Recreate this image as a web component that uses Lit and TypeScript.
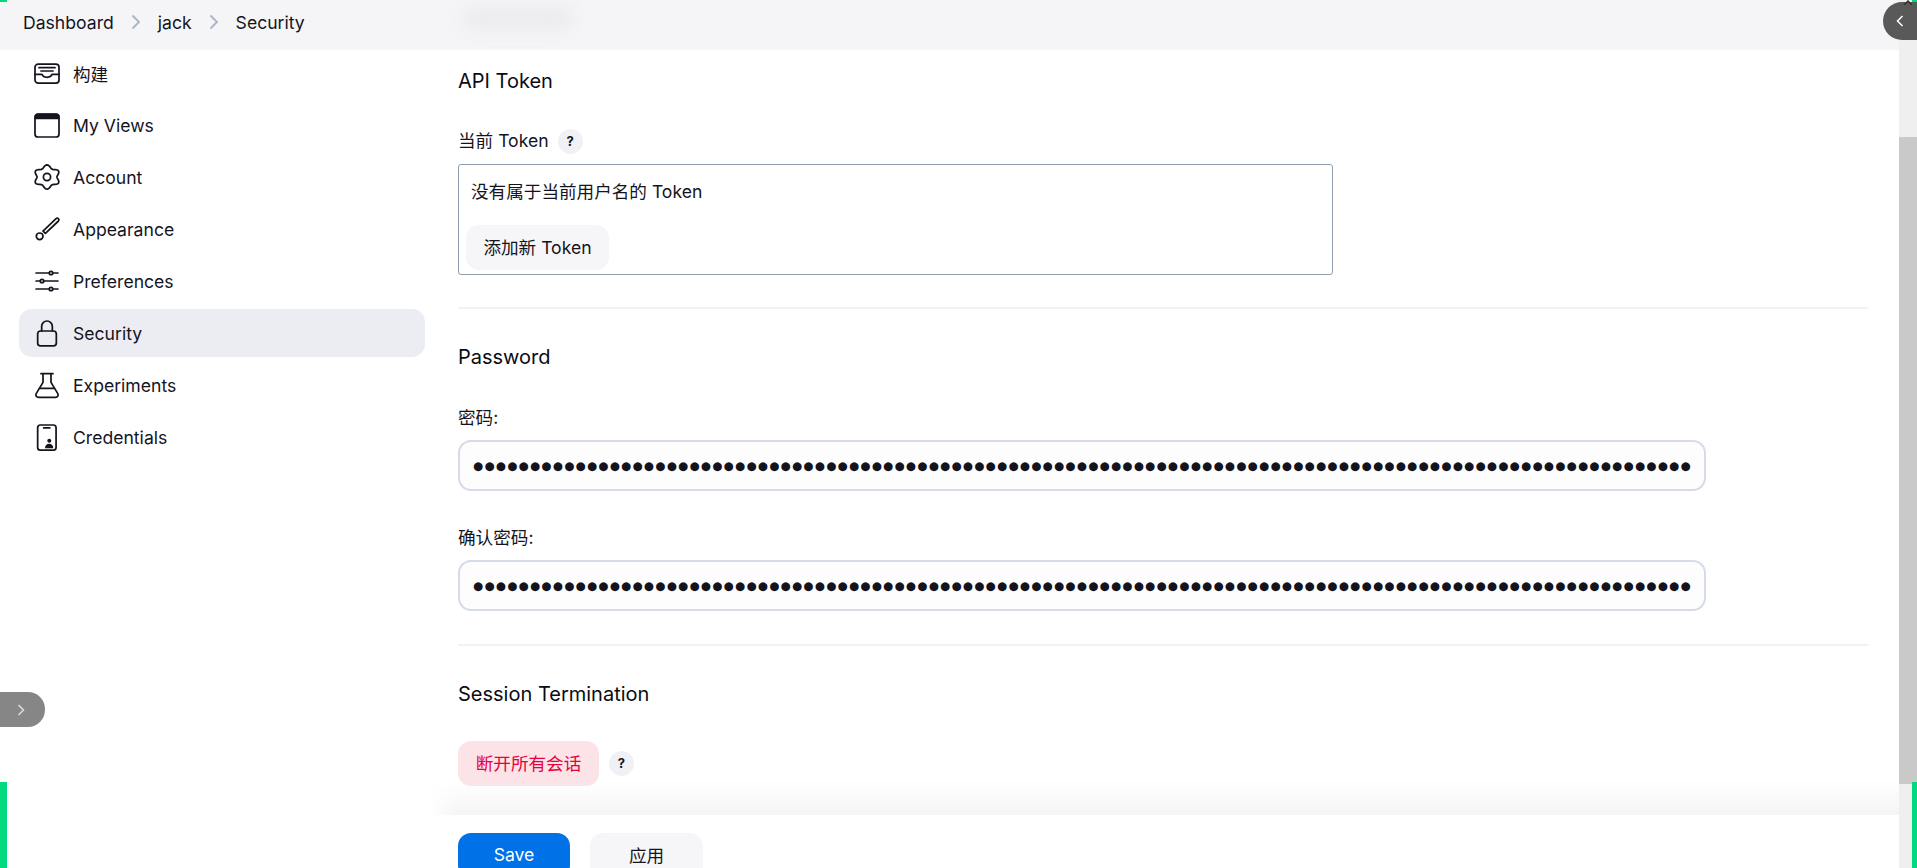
import { LitElement, html, css, svg } from "lit";
import { customElement } from "lit/decorators.js";

const gearPath = (() => {
  const pts: string[] = [];
  for (let i = 0; i < 72; i++) {
    const a = (i / 72) * Math.PI * 2;
    const r = 7.9 + 1.15 * Math.cos(6 * a);
    const x = 12 + Math.sin(a) * r * 1.1;
    const y = 12 - Math.cos(a) * r;
    pts.push(`${x.toFixed(2)} ${y.toFixed(2)}`);
  }
  return `M${pts.join("L")}Z`;
})();

const ICONS: Record<string, unknown> = {
  build: svg`<rect x="3" y="5.300" width="18" height="14.300" rx="2.400"/><path d="M3 13h5.200c.5 1.400 2 2.200 3.800 2.200s3.300-.8 3.800-2.200H21"/><path d="M6 8h12M7.500 10.500h9"/>`,
  views: svg`<rect x="3" y="3.800" width="18" height="17.200" rx="2.300"/><path d="M3.200 7V6a2 2 0 0 1 2-2h13.600a2 2 0 0 1 2 2v1z" fill="currentColor"/>`,
  account: svg`<path d=${gearPath}/><circle cx="12" cy="12" r="2.700"/>`,
  appearance: svg`<path d="M18.800 4.300a1.200 1.200 0 0 1 1.800 1.700L10.800 15.300 9 13.600z"/><circle cx="6.500" cy="17.500" r="2.500"/>`,
  prefs: svg`<path d="M3.800 6h9.700M16.500 6h3.700M3.800 12h2.900M9.800 12h10.400M3.800 18h9.700M16.500 18h3.700"/><circle cx="15" cy="6" r="1.300"/><circle cx="8.250" cy="12" r="1.300"/><circle cx="15" cy="18" r="1.300"/>`,
  lock: svg`<rect x="5" y="10.500" width="14" height="11.200" rx="2.200"/><path d="M8 10.500V7a4 4 0 0 1 8 0v3.500"/>`,
  flask: svg`<path d="M7.500 3.500h9M9 3.500V10L4 18.300c-.9 1.500 0 3 1.700 3h12.600c1.700 0 2.600-1.500 1.700-3L15 10V3.500"/><path d="M6.500 14.500h11"/>`,
  cred: svg`<rect x="5" y="3" width="13.800" height="18.800" rx="2"/><path d="M9.500 5.200h4.600"/><circle cx="13.700" cy="14.800" r="1.500" fill="currentColor" stroke="none"/><path d="M10.500 20.400c0-2 1.300-3.300 3.100-3.300s3.100 1.300 3.100 3.300z" fill="currentColor" stroke="none"/>`,
};

const NAV: [string, string, boolean?][] = [
  ["build", "构建"],
  ["views", "My Views"],
  ["account", "Account"],
  ["appearance", "Appearance"],
  ["prefs", "Preferences"],
  ["lock", "Security", true],
  ["flask", "Experiments"],
  ["cred", "Credentials"],
];

const DOTS = "●".repeat(107);

@customElement("app-root")
export class AppRoot extends LitElement {
  static styles = css`
    :host {
      display: block;
      height: 868px;
      overflow: hidden;
      position: relative;
      background: #fff;
      color: #14141f;
      font-family: Inter, "Noto Sans CJK SC", sans-serif;
      font-size: 17.6px;
    }
    .frame { display: flex; height: 868px; }
    .page { flex: 1; min-width: 0; display: flex; flex-direction: column; }
    .crumbs {
      height: 50px; flex: none; background: #f5f5f7; box-sizing: border-box;
      display: flex; align-items: center; padding: 0 0 6px 23px;
      position: relative; z-index: 2;
    }
    .crumbs a { color: #14141f; }
    .crumbs svg { width: 14px; height: 14px; fill: none; stroke: #a9b4c6; stroke-width: 1.800; margin: 0 15px; overflow: visible; }
    .blur {
      position: absolute; left: 462px; top: 6px; width: 112px; height: 24px;
      background: #ececee; filter: blur(8px); border-radius: 12px;
    }
    .body { flex: 1; display: flex; min-height: 0; }
    .side { width: 458px; flex: none; padding: 0 0 0 19px; box-sizing: border-box; margin-top: -1px; }
    .nav { width: 406px; display: flex; flex-direction: column; gap: 4px; }
    .item {
      height: 48px; display: flex; align-items: center; gap: 10px; box-sizing: border-box;
      padding: 0 0 0 12px; border-radius: 13px;
    }
    .item.on { background: #ecedf2; }
    .item svg { width: 32px; height: 32px; flex: none; fill: none; stroke: currentColor; stroke-width: 1.300; stroke-linecap: round; stroke-linejoin: round; }
    .main { flex: 1; min-width: 0; display: flex; flex-direction: column; }
    .form { flex: 1; min-height: 0; padding: 19px 31px 0 0; position: relative; }
    h3 { margin: 0; font-size: 20px; font-weight: 400; line-height: 24px; color: #0b0b14; }
    .lab { height: 26px; display: flex; align-items: center; gap: 9px; line-height: 26px; }
    .tip {
      width: 25px; height: 25px; border-radius: 50%; background: #eff1f5;
      display: flex; align-items: center; justify-content: center;
      font-size: 13px; font-weight: 700; line-height: 1;
    }
    .token-h { margin-top: 35px; }
    .box {
      margin-top: 10px; width: 875px; height: 111px; box-sizing: border-box;
      border: 1px solid #919eab; border-radius: 3px; padding: 9px 0 0 7px;
    }
    .box p { margin: 0; line-height: 36px; padding-left: 5px; height: 51px; }
    .btn {
      display: inline-flex; align-items: center; justify-content: center;
      height: 45px; border-radius: 13px; box-sizing: border-box; border: 0; padding: 0 0 3px;
      font: inherit; color: inherit; background: #f6f6f9;
    }
    .add { width: 143px; }
    hr { border: 0; height: 2px; background: #f2f2f5; margin: 0; }
    .h1 { margin-top: 36px; }
    .h3 { margin-top: 36px; }
    .pw {
      width: 1248px; height: 51px; box-sizing: border-box; border: 2px solid #d5dbe8;
      border-radius: 13px; background: #fdfdfe; margin-top: 9px;
      padding: 0 0 0 13px; display: flex; align-items: center;
      font-size: 11.600px; white-space: nowrap; color: #14141f;
      font-family: "DejaVu Sans", sans-serif;
    }
    .pw span { display: block; letter-spacing: 1.275px; }
    .pwlab { margin-top: 34px; }
    .sep1 { margin-top: 32px; }
    .sep2 { margin-top: 33px; }
    .pwlab.first { margin-top: 36px; }
    .sess { margin-top: 35px; display: flex; align-items: center; gap: 10px; }
    .danger { width: 141px; background: #fbe3e8; color: #e6003c; }
    .fade {
      position: absolute; left: -30px; right: -30px; bottom: 0; height: 35px;
      background: linear-gradient(to bottom, rgba(244,244,246,0), #f5f5f6);
      -webkit-mask-image: linear-gradient(to right, transparent, #000 30px, #000 calc(100% - 30px), transparent);
      mask-image: linear-gradient(to right, transparent, #000 30px, #000 calc(100% - 30px), transparent);
    }
    .bar { height: 53px; flex: none; display: flex; gap: 20px; padding-top: 18px; box-sizing: border-box; background: #fff; position: relative; }
    .bar .btn { height: 45px; }
    .save { width: 112px; background: #0071e6; color: #fff; }
    .apply { width: 113px; }
    .scroll { width: 18px; flex: none; background: #efefef; position: relative; }
    .thumb { position: absolute; left: 0; right: 0; top: 137px; height: 647px; background: #c9c9c9; }
    .green { position: absolute; background: #00d97e; z-index: 4; }
    .g1 { left: 0; top: 782px; width: 7px; height: 86px; }
    .g2 { right: 0; top: 782px; width: 5px; height: 86px; }
    .g3 { left: 0; top: 0; width: 7px; height: 2px; }
    .g4 { right: 0; top: 0; width: 5px; height: 2px; }
    .pill { position: absolute; display: flex; align-items: center; z-index: 5; }
    .pill svg { width: 14px; height: 14px; fill: none; stroke: currentColor; stroke-width: 1.500; }
    .pr { right: 0; top: 2px; width: 34px; height: 38px; background: #595959; color: #fff; border-radius: 19px 0 0 19px; padding-left: 10px; box-sizing: border-box; }
    .pl { left: 0; top: 692px; width: 45px; height: 35px; background: #868686; color: #ddd; border-radius: 0 17px 17px 0; padding-left: 14px; box-sizing: border-box; }
    .up { position: absolute; right: 4px; top: 0; width: 10px; height: 5px; z-index: 6; fill: none; stroke: #333; stroke-width: 1.500; }
  `;

  private tip() {
    return html`<span class="tip">?</span>`;
  }

  private chev() {
    return html`<svg viewBox="0 0 14 14"><path d="M3.500 .5l6.500 6.500-6.500 6.500"/></svg>`;
  }

  render() {
    return html`
      <div class="frame">
        <div class="page">
          <nav class="crumbs">
            <a>Dashboard</a>${this.chev()}<a>jack</a>${this.chev()}<a>Security</a>
            <div class="blur"></div>
          </nav>
          <div class="body">
            <aside class="side">
              <div class="nav">
                ${NAV.map(
                  ([ic, label, on]) => html`<div class="item ${on ? "on" : ""}">
                    <svg viewBox="0 0 24 24">${ICONS[ic]}</svg><span>${label}</span>
                  </div>`
                )}
              </div>
            </aside>
            <main class="main">
              <div class="form">
                <h3>API Token</h3>
                <div class="lab token-h">当前 Token ${this.tip()}</div>
                <div class="box">
                  <p>没有属于当前用户名的 Token</p>
                  <button class="btn add">添加新 Token</button>
                </div>
                <hr class="sep1" />
                <h3 class="h1">Password</h3>
                <div class="lab pwlab first">密码:</div>
                <div class="pw"><span>${DOTS}</span></div>
                <div class="lab pwlab">确认密码:</div>
                <div class="pw"><span>${DOTS}</span></div>
                <hr class="sep2" />
                <h3 class="h3">Session Termination</h3>
                <div class="sess"><button class="btn danger">断开所有会话</button>${this.tip()}</div>
                <div class="fade"></div>
              </div>
              <div class="bar">
                <button class="btn save">Save</button>
                <button class="btn apply">应用</button>
              </div>
            </main>
          </div>
        </div>
        <div class="scroll"><div class="thumb"></div></div>
      </div>
      <div class="green g1"></div>
      <div class="green g2"></div>
      <div class="green g3"></div>
      <div class="green g4"></div>
      <div class="pill pr"><svg viewBox="0 0 14 14"><path d="M9.500 2l-5 5 5 5"/></svg></div>
      <div class="pill pl"><svg viewBox="0 0 14 14"><path d="M4.500 2l5 5-5 5"/></svg></div>
      <svg class="up" viewBox="0 0 10 5"><path d="M1 5l4-4 4 4"/></svg>
    `;
  }
}
